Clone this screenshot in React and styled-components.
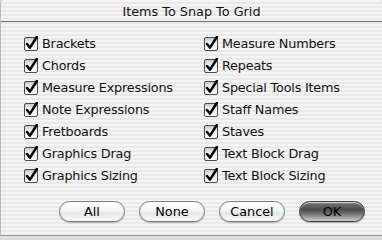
import React from "react";
import styled, { createGlobalStyle } from "styled-components";

const Global = createGlobalStyle`
  html, body { margin: 0; padding: 0; background: #dcdcdc; }
  body { font-family: "DejaVu Sans", "Liberation Sans", sans-serif; }
`;

const stripes = `repeating-linear-gradient(to bottom, #f5f5f5 0px, #f5f5f5 2px, #e9e9e9 2px, #e9e9e9 4px)`;

const Window = styled.div`
  width: 382px;
  height: 236px;
  box-sizing: border-box;
  background: ${stripes};
  border-left: 1px solid #bdbdbd;
  border-bottom: 1px solid #9a9a9a;
  border-radius: 4px 4px 0 0;
  display: flex;
  flex-direction: column;
  overflow: hidden;
`;

const TitleBar = styled.div`
  flex: none;
  height: 22px;
  box-sizing: border-box;
  padding-top: 1px;
  border-bottom: 1px solid #6a6a6a;
  background: ${stripes};
  display: flex;
  align-items: center;
  justify-content: center;
  font-size: 12.8px;
  color: #111;
`;

const Body = styled.div`
  padding: 15px 0 0 23px;
  display: flex;
  flex-direction: column;
`;

const Grid = styled.div`
  display: grid;
  grid-template-columns: 180px 160px;
  grid-auto-rows: 22px;
`;

const Item = styled.label`
  display: flex;
  align-items: flex-start;
  gap: 3px;
  font-size: 12.8px;
  color: #111;
  line-height: 14px;
`;

const Label = styled.span`
  letter-spacing: -0.2px;
`;

const Box = styled.svg`
  flex: none;
  width: 15px;
  height: 15px;
  margin-top: -1px;
`;

const CheckBox = () => (
  <Box viewBox="0 0 15 15">
    <defs>
      <linearGradient id="cbg" x1="0" y1="0" x2="0" y2="1">
        <stop offset="0" stopColor="#c4c4c4" />
        <stop offset="0.4" stopColor="#f0f0f0" />
        <stop offset="1" stopColor="#ffffff" />
      </linearGradient>
    </defs>
    <rect x="0.5" y="1.5" width="13" height="13" rx="1.5" fill="url(#cbg)" stroke="#4a4a4a" />
    <path d="M3 8 L6 11.6 L12.8 1" fill="none" stroke="#000" strokeWidth="2.5" strokeLinecap="round" strokeLinejoin="round" />
  </Box>
);

const Buttons = styled.div`
  display: flex;
  gap: 14px;
  padding-left: 35px;
  margin-top: 10px;
`;

const Button = styled.button`
  width: 66px;
  height: 21px;
  border-radius: 11px;
  border: 1px solid ${p => (p.$default ? "#3a3a3a" : "#7d7d7d")};
  font-family: "DejaVu Sans", "Liberation Sans", sans-serif;
  font-size: 12.8px;
  color: #000;
  padding: 0;
  background: ${p =>
    p.$default
      ? "linear-gradient(to bottom, #a0a0a0 0%, #6c6c6c 12%, #4c4c4c 40%, #707070 62%, #a9a9a9 85%, #cfcfcf 100%)"
      : "linear-gradient(to bottom, #ffffff 0%, #f4f4f4 45%, #e6e6e6 60%, #fbfbfb 100%)"};
  box-shadow: 0 1px 1px rgba(0,0,0,0.25), inset 0 1px 0 rgba(255,255,255,0.6);
`;

const left = ["Brackets", "Chords", "Measure Expressions", "Note Expressions", "Fretboards", "Graphics Drag", "Graphics Sizing"];
const right = ["Measure Numbers", "Repeats", "Special Tools Items", "Staff Names", "Staves", "Text Block Drag", "Text Block Sizing"];

export default function App() {
  const items = [];
  left.forEach((l, i) => {
    items.push(l, right[i]);
  });
  return (
    <>
      <Global />
      <Window>
        <TitleBar>Items To Snap To Grid</TitleBar>
        <Body>
          <Grid>
            {items.map(t => (
              <Item key={t}>
                <CheckBox />
                <Label>{t}</Label>
              </Item>
            ))}
          </Grid>
          <Buttons>
            <Button>All</Button>
            <Button>None</Button>
            <Button>Cancel</Button>
            <Button $default>OK</Button>
          </Buttons>
        </Body>
      </Window>
    </>
  );
}
